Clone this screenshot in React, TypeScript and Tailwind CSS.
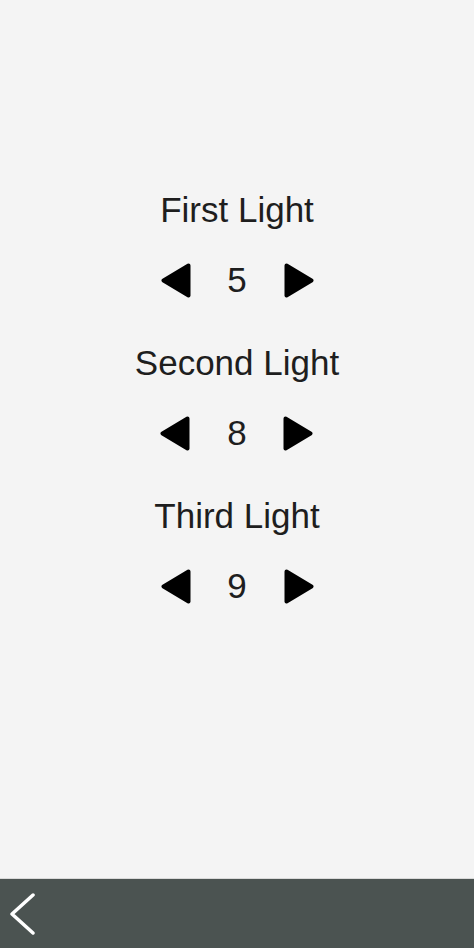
import React, { useState } from 'react';

type Light = { id: string; label: string; value: number };

const INITIAL: Light[] = [
  { id: 'first', label: 'First Light', value: 5 },
  { id: 'second', label: 'Second Light', value: 8 },
  { id: 'third', label: 'Third Light', value: 9 },
];

function Triangle({ dir }: { dir: 'left' | 'right' }) {
  const points = dir === 'left' ? '27.5,2.5 2.5,17.5 27.5,32.5' : '2.5,2.5 27.5,17.5 2.5,32.5';
  return (
    <svg width="30" height="35" viewBox="0 0 30 35" aria-hidden="true">
      <polygon points={points} fill="#000" stroke="#000" strokeWidth="4" strokeLinejoin="round" />
    </svg>
  );
}

export default function App() {
  const [lights, setLights] = useState<Light[]>(INITIAL);

  function step(id: string, delta: number) {
    setLights((prev) =>
      prev.map((l) => (l.id === id ? { ...l, value: Math.max(0, Math.min(10, l.value + delta)) } : l)),
    );
  }

  return (
    <div className="flex h-[948px] w-full flex-col bg-[#f4f4f4] font-['Liberation_Sans',Arial,sans-serif] text-[#1e1e1e]">
      <main className="flex flex-1 flex-col items-center pt-[188px]">
        {lights.map((l) => (
          <section key={l.id} className="mb-[29px] flex flex-col items-center">
            <h2 className="h-[44px] text-[35px] leading-[44px] font-normal">{l.label}</h2>
            <div className="mt-[16px] flex h-[64px] items-center">
              <button type="button" onClick={() => step(l.id, -1)} className="flex items-center">
                <Triangle dir="left" />
              </button>
              <span className="w-[93px] text-center text-[35px] leading-[44px]">{l.value}</span>
              <button type="button" onClick={() => step(l.id, 1)} className="flex items-center">
                <Triangle dir="right" />
              </button>
            </div>
          </section>
        ))}
      </main>
      <footer className="flex h-[70px] shrink-0 items-center border-t border-[#d9d9d9] bg-[#4b5351] pl-[9px]">
        <button type="button" aria-label="Back">
          <svg width="28" height="42" viewBox="0 0 28 42" aria-hidden="true">
            <polyline points="24,2 3,21 24,40" fill="none" stroke="#fff" strokeWidth="3.5" strokeLinecap="round" strokeLinejoin="round" />
          </svg>
        </button>
      </footer>
    </div>
  );
}
